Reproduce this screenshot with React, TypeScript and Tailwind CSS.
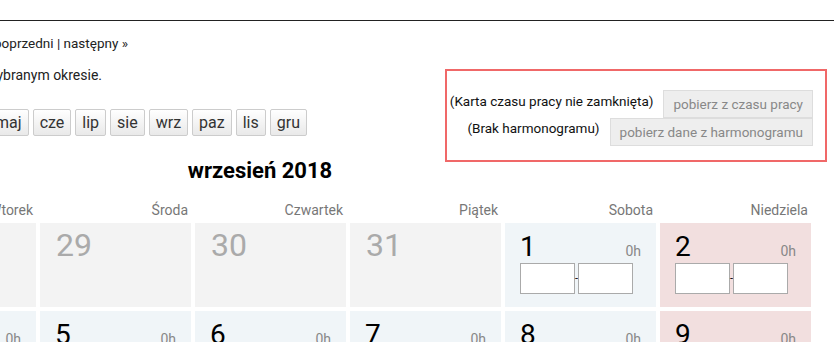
const monthButtons = ['maj', 'cze', 'lip', 'sie', 'wrz', 'paz', 'lis', 'gru'];
const dayNames = ['Poniedziałek', 'Wtorek', 'Środa', 'Czwartek', 'Piątek', 'Sobota', 'Niedziela'];

type Day = { n: number; other?: boolean; sunday?: boolean };

const days: Day[] = [
  { n: 27, other: true },
  { n: 28, other: true },
  { n: 29, other: true },
  { n: 30, other: true },
  { n: 31, other: true },
  { n: 1 },
  { n: 2, sunday: true },
  { n: 3 },
  { n: 4 },
  { n: 5 },
  { n: 6 },
  { n: 7 },
  { n: 8 },
  { n: 9, sunday: true },
];

function DayCell({ day }: { day: Day }) {
  if (day.other) {
    return (
      <div className="h-[84px] bg-[#f3f3f3] pl-[16px] pt-[4px]">
        <div className="text-[32px] leading-[36px] text-[#aaaaaa]">{day.n}</div>
      </div>
    );
  }
  return (
    <div className={`h-[84px] px-[15px] pt-[9px] ${day.sunday ? 'bg-[#f2dfdf]' : 'bg-[#f0f5f8]'}`}>
      <div className="flex items-baseline justify-between">
        <span className="text-[28px] leading-[30px] text-black">{day.n}</span>
        <span className="text-[14px] text-[#888888]">0h</span>
      </div>
      <div className="mt-[1px] flex items-center">
        <input className="w-[55px] h-[31px] border border-[#aaaaaa] bg-white" />
        <span className="text-[11px] leading-none text-black">-</span>
        <input className="w-[55px] h-[31px] border border-[#aaaaaa] bg-white" />
      </div>
    </div>
  );
}

export default function App() {
  return (
    <div className="w-[834px] h-[342px] overflow-hidden bg-white font-['Roboto',sans-serif] text-[#222222]">
      <div className="h-[21px] border-b border-[#222222]" />

      <div className="flex">
        {/* left part: navigation, info, month switcher */}
        <div className="w-[445px] shrink-0 pt-[12px]">
          <div className="w-[128px] flex justify-end whitespace-nowrap text-[13.5px] leading-[20px]">
            <span>« poprzedni | następny »</span>
          </div>
          <div className="mt-[12px] w-[102px] flex justify-end whitespace-nowrap text-[14px] leading-[20px]">
            <span>Brak wpisów w wybranym okresie.</span>
          </div>
          <div className="mt-[24px] w-[307px] flex justify-end gap-[4px]">
            {['sty', 'lut', 'mar', 'kwi', ...monthButtons].map((m) => (
              <button
                key={m}
                className="shrink-0 h-[27px] px-[6px] border border-[#cccccc] rounded-[2px] bg-gradient-to-b from-white to-[#e9e9e9] text-[16px] leading-[25px] text-[#333333]"
              >
                {m}
              </button>
            ))}
          </div>
        </div>

        {/* status box */}
        <div className="mt-[48px] -mb-[26px] w-[382px] shrink-0 h-[93px] border-2 border-[#f06868] pt-[19px] pr-[12px] flex flex-col items-end whitespace-nowrap">
          <div className="flex items-start gap-[10px]">
            <span className="pt-[1px] text-[13.5px] leading-[20px] text-[#111111]">(Karta czasu pracy nie zamknięta)</span>
            <button className="h-[28px] px-[9px] border border-[#dddddd] bg-[#eeeeee] text-[13.5px] text-[#888888]">
              pobierz z czasu pracy
            </button>
          </div>
          <div className="flex items-start gap-[10px]">
            <span className="text-[13.5px] leading-[20px] text-[#111111]">(Brak harmonogramu)</span>
            <button className="h-[28px] px-[9px] border border-[#dddddd] bg-[#eeeeee] text-[13.5px] text-[#888888]">
              pobierz dane z harmonogramu
            </button>
          </div>
        </div>
      </div>

      <div className="mt-[21px] w-[520px] text-center text-[22px] leading-[28px] font-bold text-black">
        wrzesień 2018
      </div>

      {/* calendar */}
      <div className="mt-[15px] -ml-[270px] w-[1081px] grid grid-cols-7 gap-x-[4px] gap-y-[4px]">
        {dayNames.map((d) => (
          <div key={d} className="-mb-[1px] h-[20px] pr-[3px] text-right text-[14px] leading-[20px] text-[#777777]">
            {d}
          </div>
        ))}
        {days.map((d) => (
          <DayCell key={d.n} day={d} />
        ))}
      </div>
    </div>
  );
}
